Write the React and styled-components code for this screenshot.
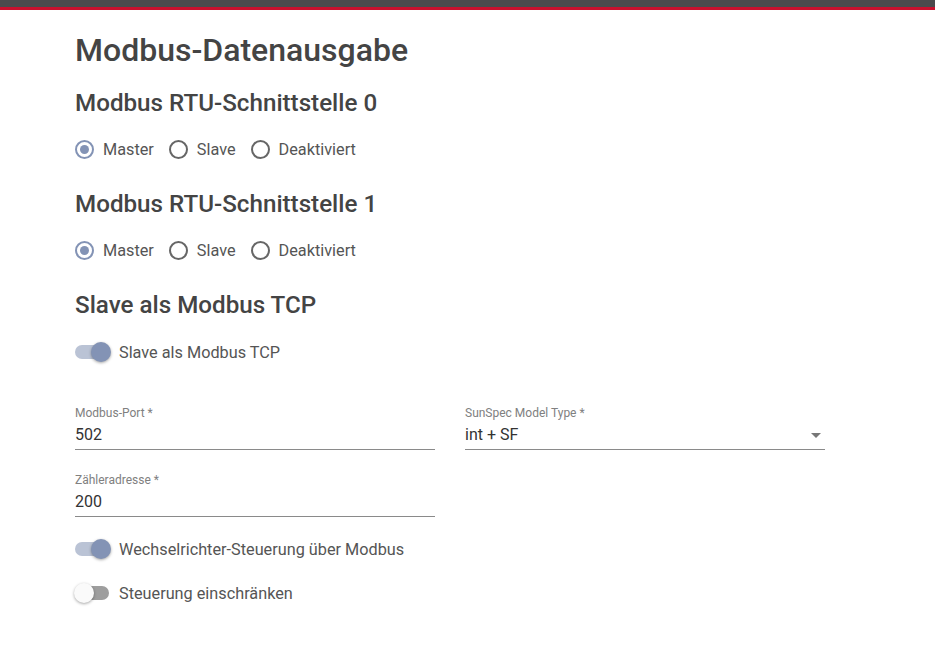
import React from 'react'
import styled, { createGlobalStyle } from 'styled-components'

const Global = createGlobalStyle`
  body {
    margin: 0;
    background: #fff;
    font-family: Roboto, "Liberation Sans", sans-serif;
    color: #444;
  }
`

const Accent = '#8393b5'

function Radio({ label, checked }) {
  return (
    <RadioItem>
      <RadioCircle checked={checked} />
      <span>{label}</span>
    </RadioItem>
  )
}

function Toggle({ label, on }) {
  return (
    <ToggleRow>
      <Track on={on}>
        <Thumb on={on} />
      </Track>
      <span>{label}</span>
    </ToggleRow>
  )
}

function Field({ label, value, select }) {
  return (
    <FieldWrap>
      <FieldLabel>{label}</FieldLabel>
      <FieldValue>
        <span>{value}</span>
        {select && <Caret />}
      </FieldValue>
    </FieldWrap>
  )
}

export default function App() {
  return (
    <>
      <Global />
      <TopBar />
      <Page>
        <Title>Modbus-Datenausgabe</Title>

        <SubTitle>Modbus RTU-Schnittstelle 0</SubTitle>
        <RadioGroup>
          <Radio label="Master" checked />
          <Radio label="Slave" />
          <Radio label="Deaktiviert" />
        </RadioGroup>

        <SubTitle>Modbus RTU-Schnittstelle 1</SubTitle>
        <RadioGroup>
          <Radio label="Master" checked />
          <Radio label="Slave" />
          <Radio label="Deaktiviert" />
        </RadioGroup>

        <SubTitle>Slave als Modbus TCP</SubTitle>
        <TcpToggle>
          <Toggle label="Slave als Modbus TCP" on />
        </TcpToggle>

        <Grid>
          <Field label="Modbus-Port *" value="502" />
          <Field label="SunSpec Model Type *" value="int + SF" select />
          <Field label="Zähleradresse *" value="200" />
        </Grid>

        <Toggles>
          <Toggle label="Wechselrichter-Steuerung über Modbus" on />
          <Toggle label="Steuerung einschränken" />
        </Toggles>
      </Page>
    </>
  )
}

const TopBar = styled.div`
  height: 7px;
  background: #4a4a4d;
  border-bottom: 3px solid #c8102e;
`

const Page = styled.div`
  padding: 0 75px 40px;
`

const Title = styled.h1`
  margin: 0;
  padding-top: 22px;
  font-size: 32px;
  line-height: 36px;
  font-weight: 500;
  color: #444;
`

const SubTitle = styled.h2`
  margin: 19px 0 0;
  font-size: 24.2px;
  line-height: 32px;
  font-weight: 500;
  color: #444;
`

const RadioGroup = styled.div`
  display: flex;
  gap: 15px;
  margin-top: 17px;
  margin-bottom: 26px;
`

const RadioItem = styled.label`
  display: flex;
  align-items: center;
  gap: 9px;
  font-size: 16.25px;
  color: #555;
  height: 26px;
`

const RadioCircle = styled.span`
  box-sizing: border-box;
  width: 19px;
  height: 19px;
  border-radius: 50%;
  border: 2px solid ${p => (p.checked ? Accent : '#666')};
  position: relative;
  &::after {
    content: '';
    display: ${p => (p.checked ? 'block' : 'none')};
    position: absolute;
    inset: 3px;
    border-radius: 50%;
    background: ${Accent};
  }
`

const TcpToggle = styled.div`
  margin-top: 19px;
`

const ToggleRow = styled.div`
  display: flex;
  align-items: center;
  gap: 10px;
  height: 24px;
  font-size: 16.25px;
  color: #555;
`

const Track = styled.span`
  position: relative;
  width: 34px;
  height: 14px;
  border-radius: 7px;
  background: ${p => (p.on ? '#bac3d5' : '#9e9e9e')};
`

const Thumb = styled.span`
  position: absolute;
  top: -3px;
  left: ${p => (p.on ? '16px' : '-1px')};
  width: 20px;
  height: 20px;
  border-radius: 50%;
  background: ${p => (p.on ? Accent : '#fafafa')};
  box-shadow: 0 1px 3px rgba(0, 0, 0, 0.35);
`

const Grid = styled.div`
  display: grid;
  grid-template-columns: 360px 360px;
  column-gap: 30px;
  row-gap: 23px;
  margin-top: 42px;
`

const FieldWrap = styled.div`
  display: flex;
  flex-direction: column;
`

const FieldLabel = styled.div`
  font-size: 12px;
  line-height: 14px;
  color: #808080;
`

const FieldValue = styled.div`
  display: flex;
  align-items: center;
  justify-content: space-between;
  font-size: 16px;
  line-height: 20px;
  color: #333;
  padding: 5px 0 4px;
  border-bottom: 1px solid #8a8a8a;
`

const Caret = styled.span`
  width: 0;
  height: 0;
  margin-right: 4px;
  border-left: 5px solid transparent;
  border-right: 5px solid transparent;
  border-top: 5px solid #777;
`

const Toggles = styled.div`
  display: flex;
  flex-direction: column;
  gap: 20px;
  margin-top: 20px;
`
